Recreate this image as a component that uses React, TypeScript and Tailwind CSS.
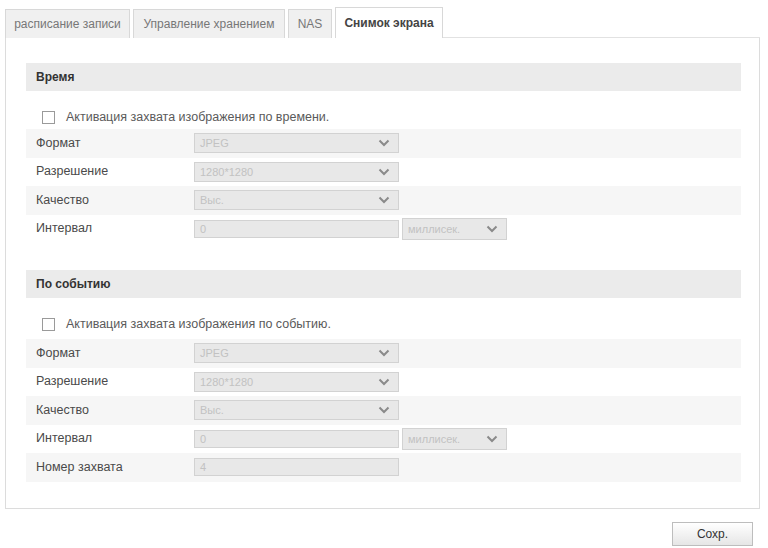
import React from "react";

const Chevron = () => (
	<svg width="12" height="8" viewBox="0 0 12 8" className="shrink-0">
		<path d="M1.5 1.5 L6 6 L10.5 1.5" fill="none" stroke="#8a8a8a" strokeWidth="2" />
	</svg>
);

const Select = ({ value, width = "w-[205px]", height = "h-[20px]" }: { value: string; width?: string; height?: string }) => (
	<div className={`${width} ${height} flex items-center justify-between border border-[#d2d2d2] bg-[#e8e8e8] pl-[5px] pr-[8px] text-[11px] text-[#c2c2c2]`}>
		<span>{value}</span>
		<Chevron />
	</div>
);

const Input = ({ value }: { value: string }) => (
	<div className="w-[205px] h-[18px] flex items-center border border-[#d2d2d2] bg-[#e8e8e8] pl-[5px] text-[11px] text-[#c2c2c2]">
		{value}
	</div>
);

type Row = { label: string; field: React.ReactNode };

const Section = ({ title, check, rows, checkHeight }: { title: string; check: string; rows: Row[]; checkHeight: string }) => (
	<div>
		<div className="h-[28px] flex items-center bg-[#ebebeb] pl-[10px] text-[12px] font-bold text-[#333]">{title}</div>
		<div className={`${checkHeight} flex items-start pt-[19px] pl-[16px] gap-[11px] text-[12.5px] text-[#5a5a5a]`}>
			<div className="w-[13px] h-[13px] border border-[#9a9a9a] bg-white mt-[1px]"></div>
			<span className="leading-[15px]">{check}</span>
		</div>
		{rows.map((row, i) => (
			<div key={i} className={`h-[28.5px] flex items-center ${i % 2 === 0 ? "bg-[#f6f6f6]" : "bg-white"}`}>
				<div className="w-[168px] pl-[10px] text-[12.5px] text-[#4a4a4a]">{row.label}</div>
				{row.field}
			</div>
		))}
	</div>
);

const Interval = () => (
	<div className="flex items-center gap-[3px]">
		<Input value="0" />
		<Select value="миллисек." width="w-[105px]" height="h-[22px]" />
	</div>
);

export default function App() {
	const timeRows: Row[] = [
		{ label: "Формат", field: <Select value="JPEG" /> },
		{ label: "Разрешение", field: <Select value="1280*1280" /> },
		{ label: "Качество", field: <Select value="Выс." /> },
		{ label: "Интервал", field: <Interval /> },
	];
	const eventRows: Row[] = [
		{ label: "Формат", field: <Select value="JPEG" /> },
		{ label: "Разрешение", field: <Select value="1280*1280" /> },
		{ label: "Качество", field: <Select value="Выс." /> },
		{ label: "Интервал", field: <Interval /> },
		{ label: "Номер захвата", field: <Input value="4" /> },
	];

	return (
		<div className="w-[768px] h-[548px] bg-white overflow-hidden font-['Liberation_Sans',Arial,sans-serif]">
			{/* Tabs */}
			<div className="flex items-end pl-[5px] pt-[7px] h-[38px]">
				<div className="flex items-end gap-[3px]">
					<div className="h-[29px] w-[125px] flex items-center justify-center border border-b-0 border-[#d8d8d8] bg-[#f0f0f0] text-[12px] text-[#777]">расписание записи</div>
					<div className="h-[29px] w-[152px] flex items-center justify-center border border-b-0 border-[#d8d8d8] bg-[#f0f0f0] text-[12px] text-[#777]">Управление хранением</div>
					<div className="h-[29px] w-[44px] flex items-center justify-center border border-b-0 border-[#d8d8d8] bg-[#f0f0f0] text-[12px] text-[#777]">NAS</div>
					<div className="h-[31px] w-[108px] flex items-center justify-center border border-b-0 border-[#d8d8d8] bg-white text-[12px] font-bold text-[#444]">Снимок экрана</div>
				</div>
				<div className="flex-1 h-[5px] border-b border-[#e2e2e2] mr-[8px]"></div>
			</div>

			{/* Panel */}
			<div className="ml-[5px] w-[755px] h-[471px] border border-t-0 border-[#dcdcdc] pl-[20px] pr-[18px] pt-[25px]">
				<Section title="Время" check="Активация захвата изображения по времени." rows={timeRows} checkHeight="h-[38px]" />
				<div className="h-[27px]"></div>
				<Section title="По событию" check="Активация захвата изображения по событию." rows={eventRows} checkHeight="h-[41px]" />
			</div>

			{/* Save */}
			<div className="flex justify-end pr-[15px] pt-[13px]">
				<button className="w-[81px] h-[24px] border border-[#bdbdbd] bg-gradient-to-b from-white to-[#e6e6e6] text-[12px] text-[#333]">Сохр.</button>
			</div>
		</div>
	);
}
